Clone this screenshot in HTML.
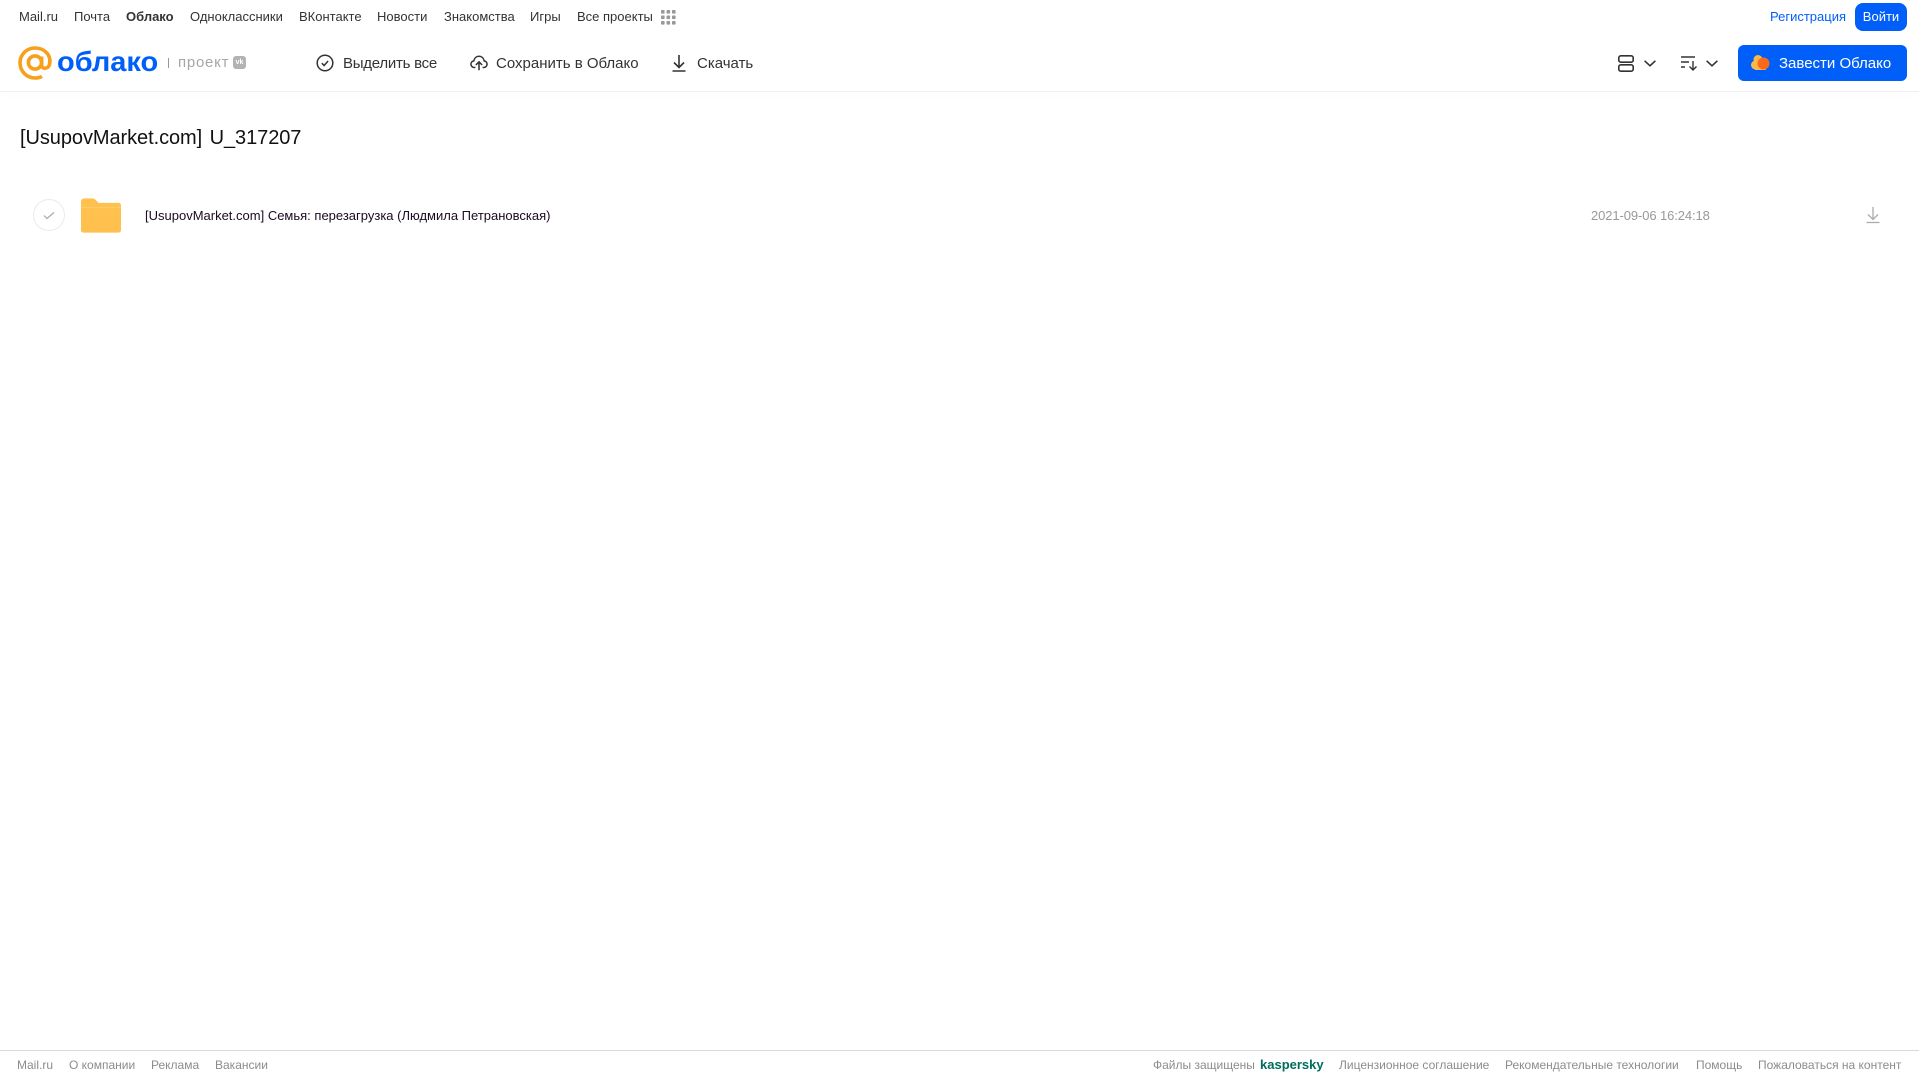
<!DOCTYPE html>
<html lang="ru"><head><meta charset="utf-8"><title>Облако</title>
<style>
html,body{margin:0;padding:0;width:1919px;height:1079px;overflow:hidden;background:#fff;font-family:"Liberation Sans","DejaVu Sans",sans-serif}
.t{position:absolute;white-space:nowrap;line-height:16px}
.n{top:9px;font-size:13px;color:#333}
.b{top:55.500px;font-size:15px;color:#333}
.f{top:1057px;font-size:12px;color:#8c8c8c}
svg{position:absolute;overflow:visible}
</style></head><body>
<span class="t n" style="left:19px">Mail.ru</span>
<span class="t n" style="left:74px">Почта</span>
<span class="t n" style="left:126px;font-weight:bold">Облако</span>
<span class="t n" style="left:190px">Одноклассники</span>
<span class="t n" style="left:299px">ВКонтакте</span>
<span class="t n" style="left:377px">Новости</span>
<span class="t n" style="left:444px">Знакомства</span>
<span class="t n" style="left:530px">Игры</span>
<span class="t n" style="left:577px">Все проекты</span>
<svg style="left:661px;top:10px" width="15" height="15" fill="#999"><rect x="0" y="0" width="3.6" height="3.6" rx=".8"/><rect x="5.5" y="0" width="3.6" height="3.6" rx=".8"/><rect x="11" y="0" width="3.6" height="3.6" rx=".8"/><rect x="0" y="5.5" width="3.6" height="3.6" rx=".8"/><rect x="5.5" y="5.5" width="3.6" height="3.6" rx=".8"/><rect x="11" y="5.5" width="3.6" height="3.6" rx=".8"/><rect x="0" y="11" width="3.6" height="3.6" rx=".8"/><rect x="5.5" y="11" width="3.6" height="3.6" rx=".8"/><rect x="11" y="11" width="3.6" height="3.6" rx=".8"/></svg>
<span class="t n" style="left:1770px;color:#005ff9">Регистрация</span>
<div class="t" style="left:1855px;top:3px;width:52px;height:28px;border-radius:8px;background:#005ff9;color:#fff;font-size:13px;line-height:28px;text-align:center">Войти</div>

<div style="position:absolute;left:0;top:91px;width:1919px;height:1px;background:#f0f0f0;box-shadow:0 3px 7px rgba(0,0,0,.06)"></div>

<svg style="left:18px;top:46px" width="34" height="34" viewBox="0 0 34 34" fill="none" stroke="#f9a01b" stroke-width="3.6"><circle cx="17" cy="16.5" r="6.6"/><path d="M23.6 10.5v8.2c0 5 6.8 4.6 7.9-.3C33.600 9 26.500 2 17 2 8.500 2 2 8.700 2 16.800 2 25.500 9 32 17 32c2.700 0 5-.5 7-1.600"/></svg>
<span class="t" id="logo" style="left:57px;top:44px;line-height:36px;font-size:28px;font-weight:bold;color:#005ff9;transform:scaleX(1.035);transform-origin:0 0">облако</span>
<div style="position:absolute;left:168px;top:58px;width:1px;height:10px;background:#999"></div>
<span class="t" style="left:178px;top:55px;font-size:15px;color:#a6a6a6;letter-spacing:.75px">проект</span>
<div style="position:absolute;left:233px;top:56px;width:13px;height:13px;border-radius:3px;background:#b3b3b3;color:#fff;font-size:7px;font-weight:bold;line-height:13px;text-align:center">vk</div>

<svg style="left:316px;top:54px" width="18" height="18" viewBox="0 0 18 18" fill="none" stroke="#333" stroke-width="1.500"><circle cx="9" cy="9" r="7.800"/><path d="M5.800 9.200l2.300 2.300 4-4.500"/></svg>
<span class="t b" style="left:343px;letter-spacing:-.25px">Выделить все</span>
<svg style="left:470px;top:54px" width="18" height="18" viewBox="0 0 20 18" fill="none" stroke="#333" stroke-width="1.700"><path d="M6 14H5C2.700 14 1 12.400 1 10.300c0-1.900 1.400-3.400 3.200-3.600C4.800 3.500 7.100 1.500 10 1.500s5.200 2 5.800 5.200c1.800.2 3.200 1.700 3.200 3.600 0 2.100-1.700 3.700-4 3.700h-1"/><path d="M10 17V8M6.500 11.200L10 7.700l3.500 3.500"/></svg>
<span class="t b" style="left:496px">Сохранить в Облако</span>
<svg style="left:672px;top:54px" width="14" height="18" viewBox="0 0 14 18" fill="none" stroke="#333" stroke-width="1.600"><path d="M7 1v12M2 8.500l5 5 5-5M0.500 17h13"/></svg>
<span class="t b" style="left:697px">Скачать</span>

<svg style="left:1618px;top:55px" width="16" height="17" viewBox="0 0 16 17" fill="none" stroke="#333" stroke-width="1.600"><rect x=".8" y=".8" width="14.400" height="6.400" rx="2"/><rect x=".8" y="9.800" width="14.400" height="6.400" rx="2"/></svg>
<svg style="left:1644px;top:60px" width="12" height="7" fill="none" stroke="#333" stroke-width="1.600"><path d="M.6.8L6 5.800 11.400.8"/></svg>
<svg style="left:1681px;top:56px" width="17" height="15" viewBox="0 0 17 15" fill="none" stroke="#333" stroke-width="1.400"><path d="M0 1h14M0 6h8M0 11h4M12 5v9M8.500 10.500L12 14l3.500-3.500"/></svg>
<svg style="left:1706px;top:60px" width="12" height="7" fill="none" stroke="#333" stroke-width="1.600"><path d="M.6.8L6 5.800 11.400.8"/></svg>

<div style="position:absolute;left:1738px;top:45px;width:169px;height:36px;border-radius:6px;background:#005ff9"></div>
<svg style="left:1751px;top:54px" width="19" height="17" viewBox="0 0 19 17"><circle cx="7" cy="5.500" r="4.500" fill="#ffb74a"/><circle cx="4.500" cy="11" r="4.500" fill="#ffb74a"/><rect x="4" y="9" width="11" height="7" fill="#ffb74a"/><circle cx="12.500" cy="9.500" r="6" fill="#f96a1c"/></svg>
<span class="t" style="left:1779px;top:55.500px;font-size:15px;color:#fff">Завести Облако</span>

<span class="t" style="left:20px;top:126px;line-height:24px;font-size:20px;color:#111;word-spacing:2px;letter-spacing:-.07px">[UsupovMarket.com] U_317207</span>

<div style="position:absolute;left:33px;top:199px;width:30px;height:30px;border-radius:50%;border:1px solid #ebebeb"></div>
<svg style="left:43px;top:211px" width="12" height="9" fill="none" stroke="#aaa" stroke-width="1.200"><path d="M1 4.500l3 3 7-6"/></svg>
<svg style="left:81px;top:198px" width="40" height="35" viewBox="0 0 41 35"><path d="M0 3.500C0 1.500 1.500 0 3.500 0h8c1.500 0 2.500.5 3.500 1.500L18 4.500h20.500c1.400 0 2.500 1.100 2.500 2.500v25.500c0 1.400-1.100 2.500-2.500 2.500h-36C1.100 35 0 33.900 0 32.500z" fill="#ffc04d"/><path d="M0 9.500h41" stroke="#ffcf70" stroke-width="1"/></svg>
<span class="t" style="left:145px;top:207.500px;font-size:13px;color:#1a0a24">[UsupovMarket.com] Семья: перезагрузка (Людмила Петрановская)</span>
<span class="t" style="left:1591px;top:207.500px;font-size:13px;color:#999;letter-spacing:-.1px">2021-09-06 16:24:18</span>
<svg style="left:1866px;top:206px" width="14" height="18" viewBox="0 0 14 18" fill="none" stroke="#aaa" stroke-width="1.300"><path d="M7 1v12M2 8.500l5 5 5-5M.5 16.500h13"/></svg>

<div style="position:absolute;left:0;top:1050px;width:1919px;height:1px;background:#d9d9d9"></div>
<span class="t f" style="left:17px">Mail.ru</span>
<span class="t f" style="left:69px">О компании</span>
<span class="t f" style="left:151px">Реклама</span>
<span class="t f" style="left:215px">Вакансии</span>
<span class="t f" style="left:1153px">Файлы защищены</span>
<span class="t f" style="left:1260px;color:#006d5c;font-weight:bold;font-size:13px">kaspersky</span>
<span class="t f" style="left:1339px">Лицензионное соглашение</span>
<span class="t f" style="left:1505px">Рекомендательные технологии</span>
<span class="t f" style="left:1696px">Помощь</span>
<span class="t f" style="left:1758px">Пожаловаться на контент</span>
</body></html>
